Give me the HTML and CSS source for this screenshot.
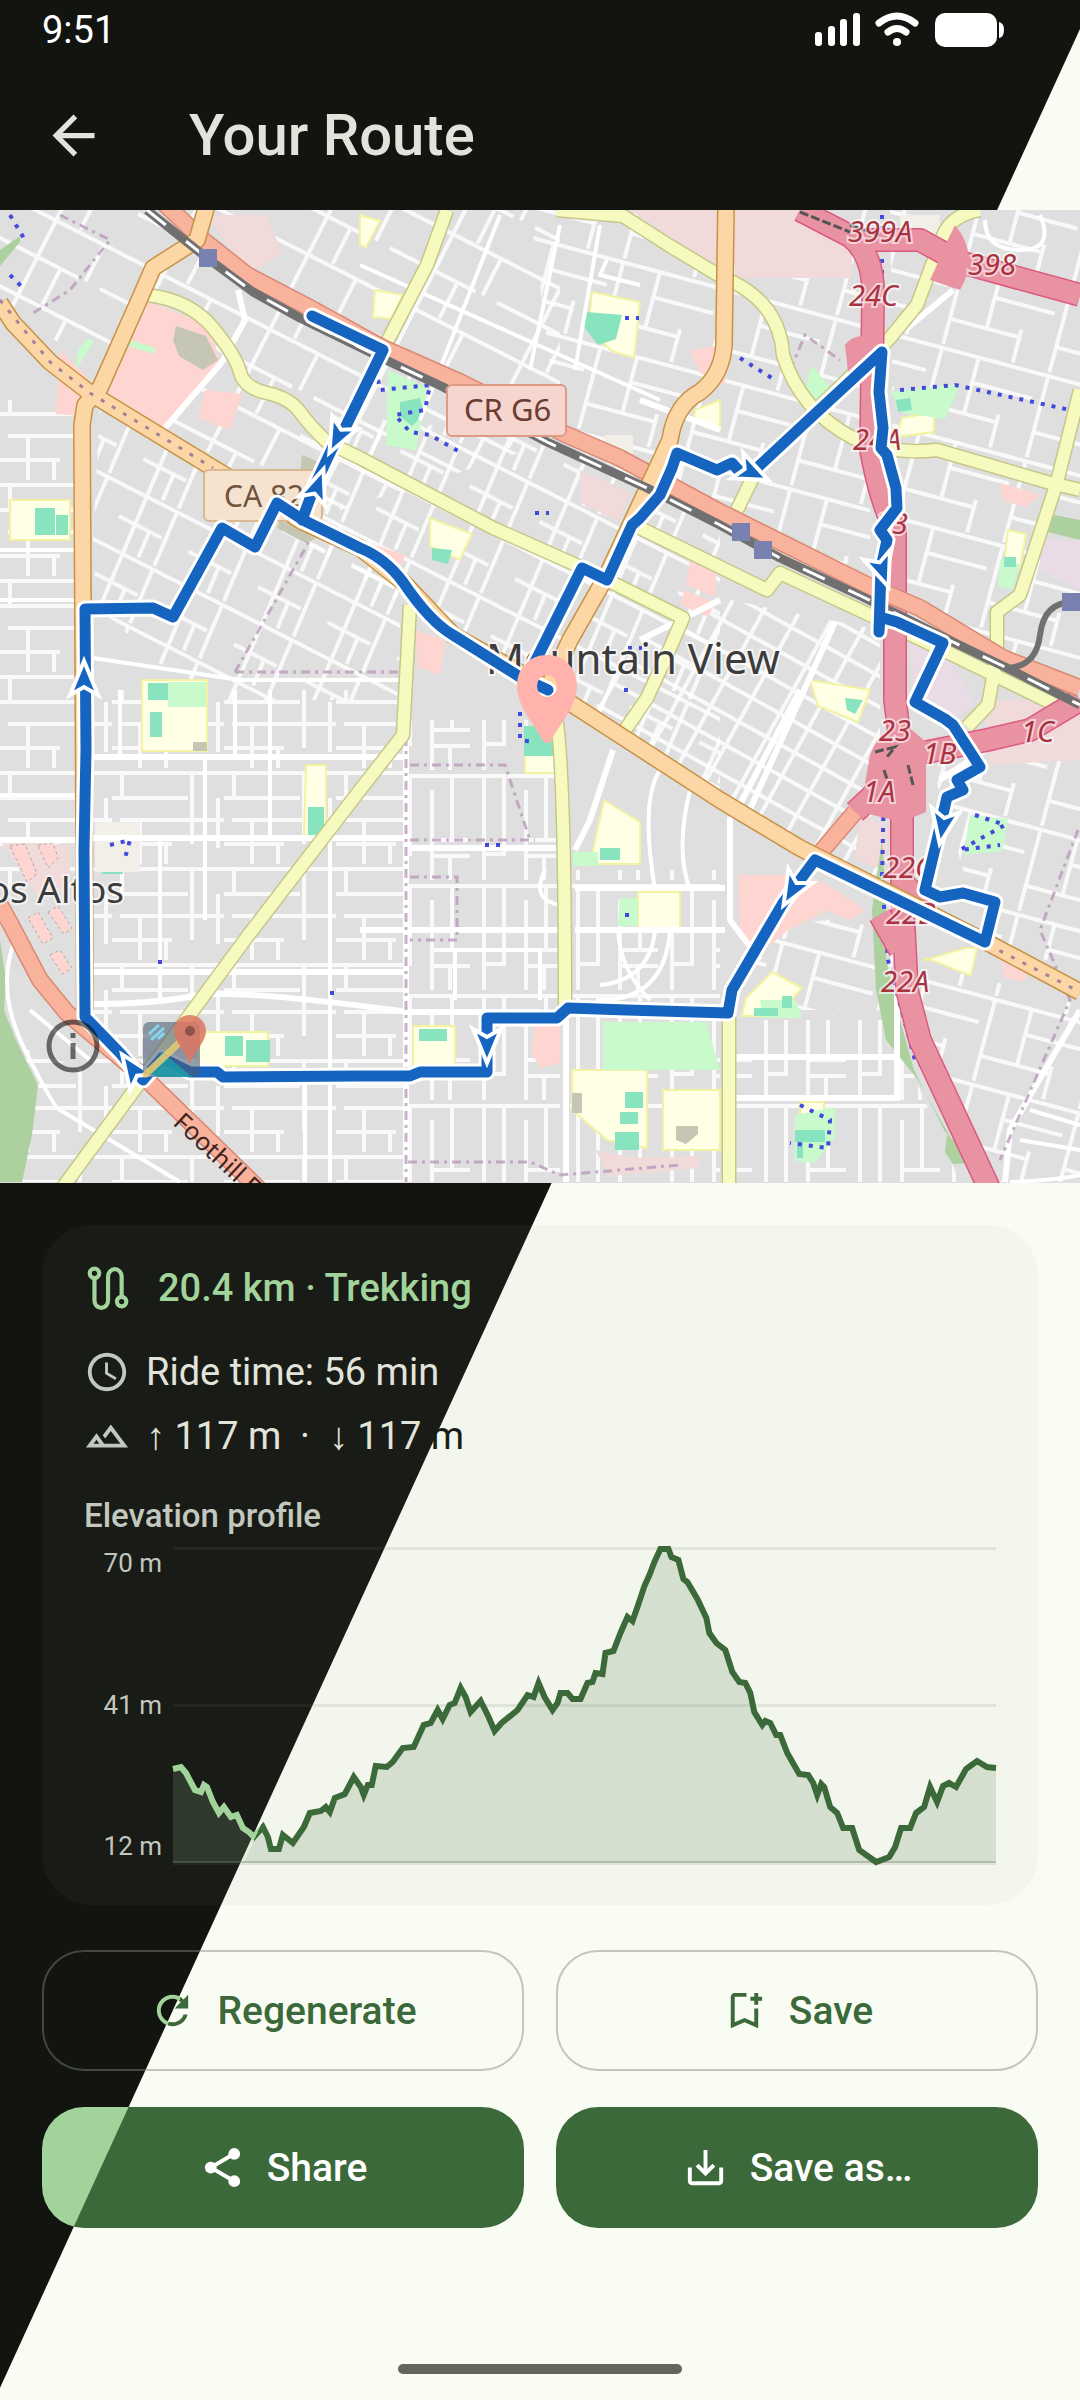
FILE: index.html
```html
<!DOCTYPE html>
<html lang="en">
<head>
<meta charset="utf-8">
<meta name="viewport" content="width=device-width, initial-scale=1">
<title>Your Route</title>
<link rel="stylesheet" href="styles.css">
</head>
<body>
<div class="status">
  <span>9:51</span>
  <svg class="status-icons" viewBox="0 0 192 36" aria-hidden="true">
    <g fill="#fff">
      <rect x="1" y="20" width="7" height="14" rx="3"/><rect x="14" y="14" width="7" height="20" rx="3"/><rect x="26" y="7" width="7" height="27" rx="3"/><rect x="39" y="1" width="7" height="33" rx="3"/>
      <rect x="121" y="1" width="62" height="34" rx="10"/><path d="M185 10q5 1 5 8t-5 8z"/>
      <circle cx="83" cy="30" r="4"/>
    </g>
    <g fill="none" stroke="#fff" stroke-width="7" stroke-linecap="round"><path d="M65 11q18-14 36 0"/><path d="M74 20q9-7 18 0"/></g>
  </svg>
</div>
<header class="appbar">
  <button class="icon-btn" type="button" aria-label="Back">
    <svg viewBox="0 0 24 24"><path fill="currentColor" d="M20 11H7.83l5.59-5.59L12 4l-8 8 8 8 1.41-1.41L7.83 13H20z"/></svg>
  </button>
  <h1>Your Route</h1>
</header>

<section class="map" aria-label="Route map">
<svg class="map-art" viewBox="0 210 1080 973" preserveAspectRatio="xMidYMid slice">
  <defs>
    <pattern id="ga" width="78" height="62" patternUnits="userSpaceOnUse" patternTransform="rotate(27) skewX(4)"><path d="M0 4H78M0 34H48M18 0V62M52 4V62M34 34V62" class="st"/></pattern>
    <pattern id="gb" width="120" height="84" patternUnits="userSpaceOnUse" patternTransform="rotate(27)"><path d="M0 3H120M0 44H76M30 0V84M84 3V44M56 44V84M100 44H120" class="st"/></pattern>
    <pattern id="gc" width="112" height="96" patternUnits="userSpaceOnUse"><path d="M0 5H112M0 30H76M8 52H112M0 76H60M80 5V76M28 52V96M54 76V96M106 30V80M10 5V30" class="st"/></pattern>
    <pattern id="gd" width="94" height="110" patternUnits="userSpaceOnUse"><path d="M0 6H94M14 6V110M34 6V84H14M56 20V110M76 6V70M56 70H94M74 86V110M56 86H94" class="st"/></pattern>
    <pattern id="ge" width="110" height="88" patternUnits="userSpaceOnUse" patternTransform="rotate(15)"><path d="M0 4H110M10 4V88M48 30H110M48 4V62M82 54V88M10 62H82" class="st"/></pattern>
    <pattern id="gf" width="32" height="27" patternUnits="userSpaceOnUse" patternTransform="rotate(29)"><path d="M0 3H32M4 0V27" class="st"/></pattern>
    <path id="arrow" d="M0-19L14 15L0 7L-14 15Z"/>
  </defs>
  <rect y="210" width="1080" height="973" fill="#e0dfdf"/>
  <!-- residential street grids -->
  <path fill="url(#gb)" d="M0 210H560V440L303 522L0 300z"/>
  <path fill="url(#ga)" d="M100 400L303 522L400 585V700H200L90 600z"/>
  <path fill="url(#ga)" d="M300 410L560 440L720 520V800L520 677L300 540z"/>
  <path fill="url(#ge)" d="M530 210H870V600L720 520L560 440z"/>
  <path fill="url(#ge)" d="M890 210H1080V690L895 600z"/>
  <path fill="url(#gc)" d="M0 400H84V890H0zM93 690H403V1182H93zM0 1040L143 1090L230 1182H0z"/>
  <path fill="url(#gd)" d="M406 720H560V1182H406zM570 870H720V1182H570zM735 1020H890L960 1182H735z"/>
  <path fill="url(#gf)" d="M640 640L730 600L880 630V880L720 800L590 715z"/>
  <path fill="url(#ge)" d="M930 760H1080V970L985 942zM915 960L1080 1005V1182H985L912 1020zM750 930L900 910V1010H740z"/>

  <!-- retail and commercial land -->
  <g fill="#ffd5d1">
    <path d="M148 302l60 22 14 42-60 64-62-32zM60 350l40 40-18 26-26-2zM205 390l38 4-14 36-30-12zM690 350l35-5v40l-25-12zM738 875l70 0 30 30-50 25-30 25-18-20zM820 880l45 30-15 10-35-15zM1000 950l30 12-6 20-20-5zM535 1025h25v38l-20 5-8-15zM415 630l30 10-5 35-22-8zM360 540l45 15-5 15-42-14zM1000 483l40 12-14 12-22-6zM690 560l26 12v25l-30-12zM684 590l30 12-5 15-28-12z"/>
  </g>
  <g fill="#f0dada">
    <path d="M207 215h60l15 38-32 22-30-40zM732 210h75l45 40v28H735zM630 210h90v60zM580 470l50 22-10 30-40-20zM860 810l30 20-5 40-30-10zM985 700h95v60l-90 5zM595 1150l40 8 65-2v12l-90 8zM0 840l40 60 30-10v-45z"/>
  </g>
  <g fill="#eadce7"><path d="M910 640l40 20 25 45-25 15-35-20zM1040 540h40v50l-40-20zM870 790l25 20-15 20z"/></g>
  <g fill="#ffd5d1" stroke="#aaa" stroke-width="1" stroke-dasharray="3 3"><path d="M10 846l15-2 12 30-10 8zM38 845l15-2 5 15-10 10zM28 918l10-6 15 26-10 6zM48 912l10-6 14 22-8 6zM50 955l10-5 12 18-10 6z"/></g>

  <!-- parks and schools -->
  <g fill="#ffffe5" stroke="#f3f2a0" stroke-width="2">
    <path d="M10 500h60v40H10zM142 680h65v71h-65zM592 292l48 10-6 56-22-7-24-22zM306 765h20v70h-22zM375 290l28 5-12 24-18-2zM430 518l42 16-12 26-30-14zM525 755h32v18h-32zM604 800l36 22v42h-50zM638 892h42v36h-42zM413 1026h42v42h-42zM572 1070h75v78l-40-8-35-30zM663 1090h57v60h-57zM772 972l30 16-25 28h-35l4-18zM198 1032h70v34h-70zM800 1102h24v16h-24zM902 418l32-6v20l-38 5zM1008 530l18 4-6 34-16-4zM810 680l60 10-12 32-40-16zM925 960l40-12 12 0-6 28-45-18zM695 410l25-10v30l-26-8zM360 215l20 6-14 26-6-2z"/>
  </g>
  <g fill="#c8facc">
    <path d="M168 682h38v25h-38zM388 370l40 18-12 62-30-5zM598 852l-25 0v14h25zM620 898h18v28h-20zM603 1022h103l14 48H603zM890 392l70-8-15 35-42-6zM811 365l18 20-6 20-20-5zM795 1115l40-8v30l-20 26-20-2zM970 815l38 4-6 32-38 4zM760 1000h35l8 18h-40zM1000 560l20 4-8 26-14-4zM78 350l10-12 6 4-18 28zM130 340l26 8-2 6-26-8z"/>
  </g>
  <g fill="#88e3bf">
    <path d="M35 508h20v27H35zM56 515h12v20H56zM148 683h20v17h-20zM150 712h12v25h-12zM587 312l35 3-6 24-18 6-14-18zM308 807h16v28h-16zM400 402l20-4 4 16-12 12-12-10zM432 548l20 2-4 14-16-4zM524 726h30v30h-30zM600 848h20v12h-20zM419 1029h28v12h-28zM625 1092h18v16h-18zM620 1112h18v12h-18zM615 1132h24v18h-24zM754 1008h24v8h-24zM782 996h10v12h-10zM795 1130h30v12h-30zM797 1142h6v16h-6zM225 1036h18v20h-18zM246 1040h24v22h-24zM126 840h10v12h-10zM102 865h21v9h-21zM845 698l18 2-8 14-8-4zM1004 557h12v10h-12zM896 400l14-2 2 12-14 2z"/>
  </g>
  <g fill="#add19e"><path d="M0 940l6 40-2 30 12 30 22 45-6 50-10 47H0zM882 840l4 60 0 60 14 60 14 50 30 60 8 10-34-60-32-40-10-50-4-80zM947 1135l22 18-2 10-14 1-8-12zM1054 515l26 5v20l-32-8zM0 250l20-14v6L0 266z"/></g>
  <g fill="#c5c7b4"><path d="M176 326l30 10 12 24-15 10-24-14-6-16zM302 455l20 8-10 14-12-4zM280 520l35 18-8 6-30-16zM193 742h14v9h-14zM572 1093h10v20h-10zM676 1126h22l0 8-12 10-10-4z"/></g>
  <path fill="#f2efe9" d="M95 822h45v50h-45zM605 435h28v20h-30zM900 215h40v20h-40z"/>

  <!-- minor roads -->
  <g class="road white">
    <path d="M93 757H403M93 838H405M0 840H84M93 1004q60 0 100-8t215 16H540M93 972H408M406 735V1182"/>
    <path d="M566 1020V1182M613 750L590 820L575 850M730 817V920L760 960M800 690L737 810M1080 1010L1010 1130L1005 1182M165 428L222 362M222 362L245 320L238 290M410 848H565M360 930H565M575 888H725M575 930H725M720 600L640 640M835 622L745 820M735 1057H900M735 1098H900M640 400L720 430M897 910V1098M953 290L905 330M940 780L1000 740"/>
    <path d="M360 265L660 400M500 215L420 420M560 225L530 370M600 225L575 370M0 550H84M0 600H84M0 795H84M120 690V757M93 658L240 680H400M440 950H540V1000M455 1000V950M330 840V1182M160 840V1004M205 760V920M235 690V757M270 690V840M305 1182V1080" stroke-width="4"/>
    <path d="M660 770Q640 800 655 890M690 790Q675 850 690 890M618 930Q620 970 650 1000M655 930Q650 980 600 985M670 930Q665 1000 600 1000M15 940Q-5 990 25 1050T60 1110L180 1182M30 1010L90 1060M545 870Q530 900 560 905M1010 1182Q1060 1180 1080 1175M1030 1110L1080 1125M1020 1140L1080 1150M985 220Q985 250 1020 250T1040 215M607 260L600 275L640 285" stroke-width="4"/>
  </g>
  <g fill="none" stroke="#b794b8" stroke-width="3" stroke-dasharray="9 5 3 5" opacity=".75">
    <path d="M410 765H505L520 810L530 840M410 840H535M410 877H457V940H410M406 605V1182M408 1162H530L560 1175L680 1165M235 672H400M235 672L310 540M1078 830L1040 930L1070 1000L1000 1160M60 215L110 240L70 290L30 315M790 370L805 335L840 360"/>
  </g>
  <g fill="none" stroke="#4349dc" stroke-width="4" stroke-dasharray="4 7">
    <path d="M378 380L380 390L430 385L425 410L395 415L410 432L430 435L460 452M520 712V740L535 742M885 740L882 880L888 960L915 1060L960 1100M900 390L955 385L1070 410M882 215V340M975 815L1005 825L960 850L1000 845M800 1105L830 1120L828 1148L790 1143M110 845L130 840L125 858M740 358L775 380M10 215L25 240M10 275L25 290M535 513h14M625 318h14M628 648h14M160 960v10M330 993h10M625 915h10M628 690h-10M500 845h-18M940 1090h10"/>
  </g>

  <!-- yellow roads -->
  <g>
    <g class="road case-y" stroke-width="15"><path id="y1" d="M557 210L623 216L670 246L720 276Q780 300 783 355Q800 410 853 438Q890 455 937 450L1047 482L1080 490M980 210Q950 215 942 238L917 305L890 338L758 467L737 510M1080 390L1057 482L1020 595L997 612V655L988 705L967 727M447 210L427 265L387 342M147 295Q190 300 213 328T240 372T267 393T300 412T327 442L360 458L493 528L583 568L683 618L670 648L647 698L623 733M640 528L767 590L780 573L870 615L947 652L1070 712M410 605L403 735L360 790L247 937L63 1187M552 700Q565 720 565 1008M729 1017V1187"/></g>
    <g class="road fill-y" stroke-width="12"><use href="#y1"/></g>
  </g>
  <!-- motorways -->
  <g class="road" stroke="#dc5a80" stroke-width="24"><path id="m1" d="M800 210L850 236Q875 255 873 300L871 450Q880 500 895 530V700L902 757V890L907 990L920 1040L990 1190M855 240H920L960 262L1080 295M902 757L987 740L1030 730L1080 700M900 770L855 812M900 880L930 910M900 950L880 915"/></g>
  <g class="road" stroke="#e892a2" stroke-width="21"><use href="#m1"/></g>
  <path fill="#e892a2" d="M870 755q10-25 22-25h20l14 12v70l-24 10-42-10zM955 225q25 30 5 65l-30-10zM845 345q8-12 28-8v30l-25 5z"/>
  <path d="M875 752l20-5-8 10M884 770l4 12M908 765l5 20M800 212l50 20M850 225l30 10" fill="none" stroke="#555" stroke-width="3" stroke-dasharray="9 3"/>
  <!-- salmon primary roads -->
  <g class="road" stroke="#d88a74" stroke-width="18"><path id="s1" d="M150 190L203 240L247 275L310 308L383 348L460 382L567 435L620 458L720 512L867 585L920 608L1003 658L1080 688M0 905L10 923L40 980L67 1013L147 1080L262 1192M855 812L820 853"/></g>
  <g class="road" stroke="#f9b29c" stroke-width="15"><use href="#s1"/></g>
  <!-- orange secondary roads -->
  <g class="road" stroke="#c79245" stroke-width="18"><path id="o1" d="M0 303L13 323L50 362L90 393L213 468L303 522L360 548L403 582L453 635L547 688L720 800L800 848L992 945L1080 992M207 205L197 240L153 268L140 298L100 388L85 405L82 425L85 1010M726 205L724 345Q722 375 700 392Q675 405 670 440L607 575L570 640L547 690"/></g>
  <g class="road" stroke="#fcd6a4" stroke-width="15"><use href="#o1"/></g>
  <path d="M0 300L50 362L90 393L213 468M930 915L1080 992" fill="none" stroke="#a5809a" stroke-width="3" stroke-dasharray="4 9"/>
  <!-- railway -->
  <g class="road rail">
    <path id="rail" d="M147 210L207 258L253 292L300 318L390 362L443 387L547 442L647 488L720 525L780 558L863 597L953 642L1007 668L1080 705"/>
    <path d="M1005 668Q1036 668 1040 635T1073 602" stroke-width="6"/>
  </g>
  <g class="road rail-dash"><use href="#rail"/></g>
  <path fill="#7981b0" d="M199 249h18v18h-18zM732 523h18v18h-18zM754 541h18v18h-18zM1062 593h18v18h-18z"/>

  <!-- place and road labels -->
  <g font-family="'Noto Sans', sans-serif">
    <rect x="204" y="470" width="118" height="51" rx="5" fill="#f5e3d0" stroke="#dcb793" stroke-width="2"/>
    <text x="224" y="507" font-size="30" fill="#70533f">CA 82</text>
    <rect x="447" y="385" width="119" height="51" rx="5" fill="#f5d5cd" stroke="#dd9a87" stroke-width="2"/>
    <text x="464" y="421" font-size="31" fill="#6b3c33">CR G6</text>
    <g class="halo" fill="#3c3c3c"><text x="486" y="674" font-size="42">Mountain View</text><text x="124" y="903" font-size="37" text-anchor="end">os Altos</text></g>
    <text transform="translate(172 1124) rotate(43)" font-size="25" fill="#40231f">Foothill E</text>
    <g class="halo exit" font-size="29" fill="#a93341">
      <text x="848" y="242">399A</text><text x="968" y="275">398</text><text x="849" y="306">24C</text><text x="853" y="450">24A</text><text x="876" y="534">23</text><text x="879" y="741">23</text><text x="923" y="764">1B</text><text x="1021" y="742">1C</text><text x="863" y="802">1A</text><text x="883" y="878">22C</text><text x="886" y="924">22B</text><text x="881" y="992">22A</text>
    </g>
  </g>

  <!-- planned route -->
  <g class="route-casing">
    <path id="route" d="M548 690L520 677L453 635Q430 622 403 582Q385 558 360 548L303 520L277 503L255 547L222 528L173 617L153 608L85 609L86 750L84 850L85 1017L120 1053L143 1080L162 1058L190 1072H217L223 1077L360 1076H410L420 1072H487V1018H557L568 1008L627 1010L728 1013L732 990L783 903L815 860L985 942L995 902L963 893L940 897L925 890L937 840L947 797L963 790L957 780L980 767L953 725L945 719L915 702L943 643L897 622L880 617L879 632L881 568L887 540L880 530L897 508L896 488L887 455L881 448L883 428L879 392L882 352L803 425L758 467L740 472L732 463L717 470L677 453L672 468L660 495L640 518L632 525L607 580L582 568L530 672M302 520L315 485L337 438L345 428L383 350L312 316"/>
  </g>
  <g class="route-core"><use href="#route"/></g>
  <g fill="#1565c0" stroke="#fff" stroke-width="4">
    <use href="#arrow" transform="translate(338 436) rotate(207)"/><use href="#arrow" transform="translate(317 487) rotate(20)"/><use href="#arrow" transform="translate(84 680)"/><use href="#arrow" transform="translate(133 1070) rotate(-35)"/><use href="#arrow" transform="translate(487 1044) rotate(180)"/><use href="#arrow" transform="translate(751 472) rotate(115)"/><use href="#arrow" transform="translate(882 569) rotate(160)"/><use href="#arrow" transform="translate(943 825) rotate(190)"/><use href="#arrow" transform="translate(793 889) rotate(210)"/>
  </g>
  <path fill="#ffb3ac" fill-rule="evenodd" d="M547 655c17 0 30 13 30 31c0 20-17 38-25 53q-2 4-5 4t-5-4c-8-15-25-33-25-53c0-18 13-31 30-31zm0 20a10 11 0 1 0 .1 0z"/>

  <!-- map library badge -->
  <g>
    <rect x="143" y="1022" width="57" height="55" rx="6" fill="#4d5f78" opacity=".6"/>
    <path d="M149 1034l10-9M151 1040l13-12M158 1039l6-6" stroke="#7fd8f0" stroke-width="3"/>
    <path d="M147 1074L162 1052L192 1077H160z" fill="#1c99a8" opacity=".9"/>
    <path d="M146 1074L178 1044" stroke="#e8cc70" stroke-width="7" stroke-linecap="round" opacity=".85"/>
    <path fill="#dc7560" opacity=".85" d="M190 1015c9 0 16 7 16 16c0 11-12 21-16 33c-4-12-16-22-16-33c0-9 7-16 16-16z"/>
    <circle cx="190" cy="1031" r="5" fill="#8d5549"/>
  </g>
  <g fill="none" stroke="#000" stroke-opacity=".55" stroke-width="5"><circle cx="73" cy="1046" r="24"/><path d="M73 1043v16M73 1033v5"/></g>
</svg>
</section>

<main>
  <section class="card">
    <h2 class="summary">
      <svg viewBox="0 0 44 44" aria-hidden="true"><g fill="none" stroke="currentColor" stroke-width="4"><circle cx="10" cy="8" r="4.500"/><path d="M10 13V34a6.500 7 0 0 0 13 0V11a6.500 7 0 0 1 13 0V30"/><circle cx="36" cy="35" r="4.500"/></g></svg>
      20.4 km · Trekking
    </h2>
    <p class="fact">
      <svg viewBox="0 0 24 24" aria-hidden="true"><path fill="currentColor" d="M11.990 2C6.470 2 2 6.480 2 12s4.470 10 9.990 10C17.520 22 22 17.520 22 12S17.520 2 11.990 2zM12 20c-4.420 0-8-3.580-8-8s3.580-8 8-8 8 3.580 8 8-3.580 8-8 8zm.5-13H11v6l5.250 3.150.75-1.230-4.500-2.670z"/></svg>
      <span>Ride time: 56 min</span>
    </p>
    <p class="fact climb">
      <svg viewBox="0 0 24 24" aria-hidden="true"><path fill="currentColor" d="M14 6l-4.220 5.630 1.250 1.670L14 9.330 19 16h-8.460l-4.010-5.370L1 18h22L14 6zM5 16l1.520-2.030L8.040 16H5z"/></svg>
      <span>↑ 117 m &nbsp;·&nbsp; ↓ 117 <span class="on-light">m</span></span>
    </p>
    <h3>Elevation profile</h3>
    <div class="chart">
      <div class="axis"><span>70 m</span><span>41 m</span><span>12 m</span></div>
      <svg viewBox="0 0 824 318" preserveAspectRatio="none" role="img" aria-label="Elevation from 12 m to 70 m">
        <defs>
          <linearGradient id="split" gradientUnits="userSpaceOnUse" x1="40" y1="272" x2="124" y2="310.500"><stop offset=".5" stop-color="#a1d39a"/><stop offset=".5" stop-color="#3b6939"/></linearGradient>
        </defs>
        <path class="grid-line" d="M0 1.500H824M0 158.500H824M0 316.500H824"/>
        <path fill="url(#split)" fill-opacity=".16" d="M0 222L8 220L13 226L22 243L28 245L31 238L34 240L40 255L46 266L51 260L58 270L64 268L70 281L76 285L81 290L90 280L95 290L98 302H106L110 288L120 296L131 280L137 266L148 264L153 260L157 265L162 251L172 247L181 230L188 240L191 248L195 238H199L203 219L214 220L220 215L230 201L241 200L251 178L258 176L265 163L270 172L277 158L282 156L288 141L293 150L298 165L308 154L316 170L322 184L329 176L345 163L355 148L361 150L366 136L372 150L380 163L385 156L388 146H395L400 152H408L415 136L420 135L423 126L430 127L433 106L441 104L448 86L455 70L460 74L465 60L472 39L477 28L482 15L488 2H496L499 10L506 13L511 32L515 35L525 52L534 71L537 86L544 96L553 103L560 125L567 135L573 136L578 146L582 165L590 178L593 174L598 176L604 188H608L615 206L627 227L636 228L641 236L645 248L649 237L652 240L658 260L665 266L671 281H680L687 303L704 315L717 310L723 300L729 281H738L744 266L752 260L758 240L765 255L771 239L777 236L784 240L794 222L805 214L815 220L824 221V315H0z"/>
        <path class="base-line" d="M0 315H824"/>
        <path fill="none" stroke="url(#split)" stroke-width="6" d="M0 222L8 220L13 226L22 243L28 245L31 238L34 240L40 255L46 266L51 260L58 270L64 268L70 281L76 285L81 290L90 280L95 290L98 302H106L110 288L120 296L131 280L137 266L148 264L153 260L157 265L162 251L172 247L181 230L188 240L191 248L195 238H199L203 219L214 220L220 215L230 201L241 200L251 178L258 176L265 163L270 172L277 158L282 156L288 141L293 150L298 165L308 154L316 170L322 184L329 176L345 163L355 148L361 150L366 136L372 150L380 163L385 156L388 146H395L400 152H408L415 136L420 135L423 126L430 127L433 106L441 104L448 86L455 70L460 74L465 60L472 39L477 28L482 15L488 2H496L499 10L506 13L511 32L515 35L525 52L534 71L537 86L544 96L553 103L560 125L567 135L573 136L578 146L582 165L590 178L593 174L598 176L604 188H608L615 206L627 227L636 228L641 236L645 248L649 237L652 240L658 260L665 266L671 281H680L687 303L704 315L717 310L723 300L729 281H738L744 266L752 260L758 240L765 255L771 239L777 236L784 240L794 222L805 214L815 220L824 221"/>
      </svg>
    </div>
  </section>

  <div class="actions">
    <button class="outlined" type="button">
      <svg viewBox="0 0 24 24" aria-hidden="true"><defs><linearGradient id="split-icon" gradientUnits="userSpaceOnUse" x1="8" y1="9.700" x2="18" y2="14.300"><stop offset=".5" stop-color="#a1d39a"/><stop offset=".5" stop-color="#3b6939"/></linearGradient></defs><path fill="url(#split-icon)" d="M17.650 6.350C16.200 4.900 14.210 4 12 4c-4.420 0-7.990 3.580-7.990 8s3.570 8 7.990 8c3.730 0 6.840-2.550 7.730-6h-2.080c-.82 2.330-3.040 4-5.650 4-3.310 0-6-2.690-6-6s2.690-6 6-6c1.660 0 3.140.69 4.220 1.780L13 11h7V4l-2.350 2.350z"/></svg>
      Regenerate
    </button>
    <button class="outlined" type="button">
      <svg viewBox="0 0 24 24" aria-hidden="true"><path fill="currentColor" d="M17 11v6.970l-5-2.140-5 2.140V5h6V3H7c-1.100 0-2 .9-2 2v16l7-3 7 3V11h-2zm4-4h-2v2h-2V7h-2V5h2V3h2v2h2v2z"/></svg>
      Save
    </button>
    <button class="filled" type="button">
      <svg viewBox="0 0 24 24" aria-hidden="true"><g fill="currentColor"><circle cx="18" cy="5" r="3"/><circle cx="6" cy="12" r="3"/><circle cx="18" cy="19" r="3"/></g><path d="M18 5L6 12L18 19" fill="none" stroke="currentColor" stroke-width="2"/></svg>
      Share
    </button>
    <button class="filled" type="button">
      <svg viewBox="0 0 24 24" aria-hidden="true"><path fill="currentColor" d="M19 12v7H5v-7H3v7c0 1.100.9 2 2 2h14c1.100 0 2-.9 2-2v-7h-2zm-6 .67l2.590-2.580L17 11.500l-5 5-5-5 1.410-1.410L11 12.670V3h2z"/></svg>
      Save as…
    </button>
  </div>
</main>
<footer class="home"><span class="home-bar"></span></footer>
</body>
</html>
```
FILE: styles.css
```css
:root {
  --dark: #11140f;
  --light: #f9fcf2;
  --green-dark: #3b6939;
  --green-light: #a1d39a;
}

* { box-sizing: border-box; margin: 0; }

body {
  display: flex;
  flex-direction: column;
  min-height: 100vh;
  font-family: Roboto, sans-serif;
  color: #e1e4da;
  background: linear-gradient(114.6deg, var(--dark) calc(50% + 3px), var(--light) calc(50% + 4px)) fixed;
}

svg { display: block; }
button { font: inherit; cursor: pointer; }

.status {
  display: flex;
  align-items: center;
  justify-content: space-between;
  height: 60px;
  padding: 0 74px 0 42px;
  font-size: 38px;
  color: #fff;
}
.status-icons { width: 192px; height: 36px; }

.appbar {
  display: flex;
  align-items: center;
  gap: 84px;
  height: 150px;
  padding: 0 42px;
}
.icon-btn { padding: 0; border: 0; background: none; color: inherit; }
.icon-btn svg { width: 63px; height: 63px; }
h1 { font-size: 58px; font-weight: 500; }

.map { overflow: hidden; }
.map-art { width: 100%; height: auto; }
.road { fill: none; stroke-linejoin: round; }
.st { fill: none; stroke: #fff; stroke-width: 4; stroke-opacity: .8; }
.white { stroke: #fff; stroke-width: 6; }
.case-y { stroke: #c5c78a; }
.fill-y { stroke: #f7fabf; }
.rail { stroke: #707070; stroke-width: 9; }
.rail-dash { stroke: #fff; stroke-width: 3; stroke-dasharray: 24 26; }
.route-casing, .route-core { fill: none; stroke-linejoin: round; stroke-linecap: round; }
.route-casing { stroke: #fff; stroke-width: 17; }
.route-core { stroke: #1565c0; stroke-width: 11; }
.halo text { paint-order: stroke; stroke: #fff; stroke-width: 4px; stroke-opacity: .6; }
.exit { font-style: italic; }

main { padding: 42px 42px 0; }

.card {
  padding: 42px 42px 40px;
  border-radius: 50px;
  background: rgba(150, 158, 146, .06);
}
.summary {
  display: flex;
  align-items: center;
  gap: 28px;
  height: 42px;
  margin-bottom: 42px;
  font-size: 38px;
  font-weight: 500;
  color: var(--green-light);
}
.summary svg { width: 46px; height: 46px; }
.fact {
  display: flex;
  align-items: center;
  gap: 16px;
  height: 42px;
  margin-bottom: 22px;
  font-size: 38px;
}
.fact svg { width: 46px; height: 46px; color: #c2c8bd; }
.climb { margin-bottom: 38px; }
.on-light { color: #191d17; }
h3 {
  margin-bottom: 10px;
  font-size: 33px;
  line-height: 42px;
  font-weight: 500;
  color: #c2c8bd;
}

.chart {
  display: grid;
  grid-template-columns: 78px 1fr;
  gap: 11px;
  height: 318px;
}
.axis {
  display: flex;
  flex-direction: column;
  justify-content: space-between;
  padding-bottom: 3px;
  text-align: right;
  font-size: 26px;
  line-height: 32px;
  color: #c2c8bd;
}
.chart svg { width: 100%; height: 318px; overflow: visible; }
.grid-line { fill: none; stroke: rgba(112, 118, 108, .14); stroke-width: 3; }
.base-line { fill: none; stroke: rgba(120, 130, 115, .4); stroke-width: 2; }

.actions {
  display: grid;
  grid-template-columns: 1fr 1fr;
  gap: 36px 32px;
  padding-top: 45px;
}
.outlined, .filled {
  display: flex;
  align-items: center;
  justify-content: center;
  gap: 21px;
  height: 121px;
  border-radius: 42px;
  font-size: 39px;
  font-weight: 500;
}
.outlined svg, .filled svg { width: 47px; height: 47px; }
.outlined {
  border: 2px solid rgba(128, 133, 125, .45);
  background: none;
  color: var(--green-dark);
}
.filled {
  border: 0;
  color: #fff;
  background: linear-gradient(114.6deg, var(--green-light) calc(50% + 3px), var(--green-dark) calc(50% + 4px)) fixed;
}

.home {
  display: flex;
  justify-content: center;
  margin-top: auto;
  padding-bottom: 26px;
}
.home-bar { width: 284px; height: 10px; border-radius: 5px; background: #63655f; }
```
